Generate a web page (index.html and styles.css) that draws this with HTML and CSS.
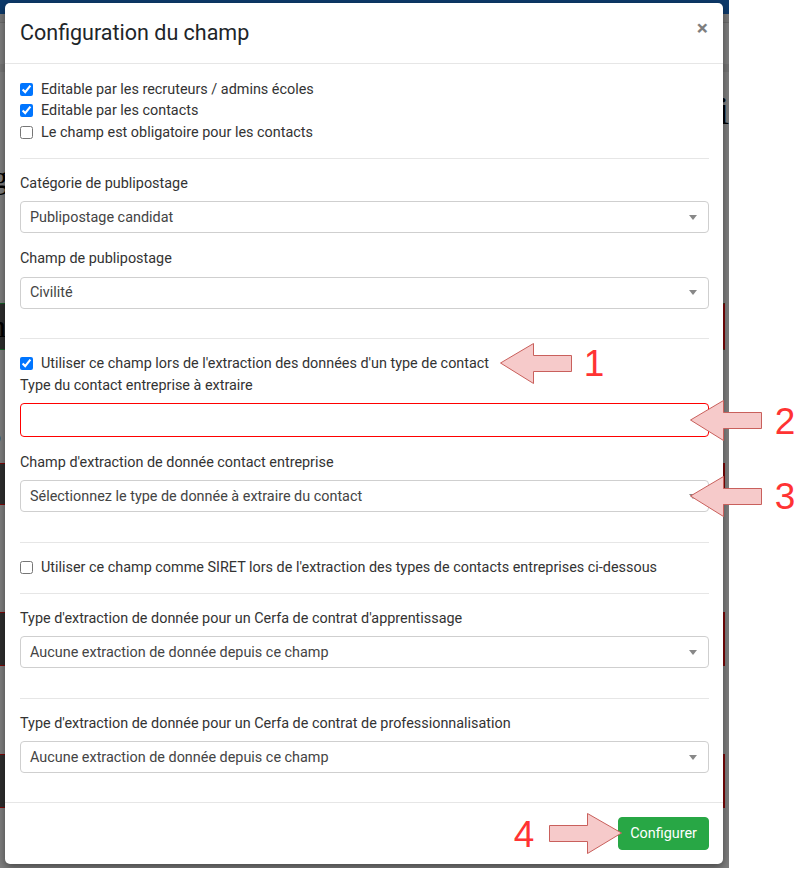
FILE: index.html
```html
<!DOCTYPE html>
<html lang="fr">
<head>
    <meta charset="UTF-8">
    <meta name="viewport" content="width=device-width, initial-scale=1.0">
    <title>Configuration du champ</title>
    <link rel="stylesheet" href="styles.css">
</head>
<body>

    <!-- Page derrière la modale (on n'en voit que les bords) -->
    <div class="screen">
        <div class="topbar"></div>
        <div class="subbar"></div>
        <div class="toolbar"></div>
        <h1 class="bg-title">i</h1>
        <p class="bg-line">g</p>
        <div class="bg-card bg-card-green"><span>n</span></div>
        <p class="bg-line bg-line-s">s</p>
        <div class="bg-card bg-card-short"></div>
        <div class="bg-card bg-card-c"></div>
        <div class="bg-card bg-card-d"></div>

        <div class="backdrop"></div>

        <!-- Modale -->
        <div class="modal">
            <div class="modal-header">
                <h4 class="modal-title">Configuration du champ</h4>
                <button type="button" class="close">&times;</button>
            </div>

            <div class="modal-body">
                <label class="check"><input type="checkbox" checked>Editable par les recruteurs / admins écoles</label>
                <label class="check"><input type="checkbox" checked>Editable par les contacts</label>
                <label class="check"><input type="checkbox">Le champ est obligatoire pour les contacts</label>

                <hr>

                <div class="form-group">
                    <label class="field-label">Catégorie de publipostage</label>
                    <div class="select"><span>Publipostage candidat</span><b class="caret"></b></div>
                </div>
                <div class="form-group">
                    <label class="field-label">Champ de publipostage</label>
                    <div class="select"><span>Civilité</span><b class="caret"></b></div>
                </div>

                <hr>

                <label class="check"><input type="checkbox" checked>Utiliser ce champ lors de l'extraction des données d'un type de contact</label>
                <div class="form-group">
                    <label class="field-label">Type du contact entreprise à extraire</label>
                    <input type="text" class="input input-error">
                </div>
                <div class="form-group">
                    <label class="field-label">Champ d'extraction de donnée contact entreprise</label>
                    <div class="select"><span>Sélectionnez le type de donnée à extraire du contact</span><b class="caret"></b></div>
                </div>

                <hr>

                <label class="check"><input type="checkbox">Utiliser ce champ comme SIRET lors de l'extraction des types de contacts entreprises ci-dessous</label>

                <hr>

                <div class="form-group">
                    <label class="field-label">Type d'extraction de donnée pour un Cerfa de contrat d'apprentissage</label>
                    <div class="select"><span>Aucune extraction de donnée depuis ce champ</span><b class="caret"></b></div>
                </div>

                <hr>

                <div class="form-group">
                    <label class="field-label">Type d'extraction de donnée pour un Cerfa de contrat de professionnalisation</label>
                    <div class="select"><span>Aucune extraction de donnée depuis ce champ</span><b class="caret"></b></div>
                </div>
            </div>

            <div class="modal-footer">
                <button type="button" class="btn-success">Configurer</button>
            </div>
        </div>
    </div>

    <!-- Annotations (flèches et numéros) -->
    <svg class="annotations" width="811" height="870" viewBox="0 0 811 870">
        <polygon points="500.5,363 533.5,343.5 533.5,355.5 571.5,355.5 571.5,371.5 533.5,371.5 533.5,383.5"/>
        <polygon points="690.5,420 723.5,400.5 723.5,412.5 761.5,412.5 761.5,428.5 723.5,428.5 723.5,440.5"/>
        <polygon points="690.5,496 723.5,476.5 723.5,488.5 761.5,488.5 761.5,504.5 723.5,504.5 723.5,516.5"/>
        <polygon points="621.5,833 587.5,813.5 587.5,825.5 549.5,825.5 549.5,841.5 587.5,841.5 587.5,853.5"/>
        <text x="594" y="376">1</text>
        <text x="785" y="434">2</text>
        <text x="785" y="509">3</text>
        <text x="524" y="847">4</text>
    </svg>

</body>
</html>
```

FILE: styles.css
```css
* {
    box-sizing: border-box;
}

body {
    margin: 0;
    background: #fff;
    position: relative;
    width: 811px;
    height: 870px;
    overflow: hidden;
}

/* Page en arrière-plan (visible seulement sur les bords) */
.screen {
    position: relative;
    width: 729px;
    height: 868px;
    overflow: hidden;
    background: #fff;
    font-family: "Liberation Serif", serif;
    color: #000;
}

.topbar {
    height: 14px;
    background: #1a74d6;
}

.subbar {
    height: 9px;
    background: #f2f2f2;
    border-bottom: 1px solid #d8d8d8;
}

.toolbar {
    height: 8px;
    margin-top: 41px;
    background: #ececec;
}

.bg-title {
    margin: 16px 0 0;
    font-size: 40px;
    line-height: 46px;
    font-weight: 400;
    text-align: right;
    white-space: nowrap;
}

.bg-line {
    margin: 25px 0 0 -8px;
    font-size: 32px;
    line-height: 37px;
    white-space: nowrap;
}

.bg-line-s {
    margin: 58px 0 0 -14px;
    font-size: 40px;
    line-height: 46px;
}

.bg-card {
    width: 725px;
    height: 54px;
    margin-top: 107px;
    background: #5c5c5c;
    border-top: 1px solid #ff1010;
    border-bottom: 1px solid #ff1010;
    border-right: 2px solid #ff1010;
    font-size: 32px;
    line-height: 44px;
    white-space: nowrap;
}

.bg-card span {
    margin-left: -10px;
}

.bg-card-green {
    height: 47px;
    border-top-color: #2fc050;
    border-bottom-color: #2fc050;
}

.bg-card-short {
    height: 42px;
    margin-top: 9px;
}

.bg-card-d {
    margin-top: 88px;
}

.backdrop {
    position: absolute;
    top: 0;
    left: 0;
    right: 0;
    bottom: 0;
    background: rgba(0, 0, 0, 0.5);
}

/* Modale */
.modal {
    position: absolute;
    left: 5px;
    top: 3px;
    width: 718px;
    background: #fff;
    border-radius: 5px;
    box-shadow: 0 3px 8px rgba(0, 0, 0, 0.45);
    font-family: Roboto, "Noto Sans", sans-serif;
    font-size: 14.4px;
    color: #212529;
}

.modal-header {
    display: flex;
    justify-content: space-between;
    align-items: flex-start;
    padding: 15px;
    border-bottom: 1px solid #e6e6e6;
    height: 61px;
}

.modal-title {
    margin: 0;
    font-size: 21.5px;
    font-weight: 400;
    line-height: 30px;
}

.close {
    padding: 0;
    margin: 0;
    background: none;
    border: 0;
    font-family: Roboto, sans-serif;
    font-size: 21px;
    font-weight: 700;
    line-height: 21px;
    color: #000;
    opacity: 0.5;
}

/* flex en colonne : les marges ne fusionnent pas */
.modal-body {
    display: flex;
    flex-direction: column;
    padding: 14.5px 14px 13.5px 15px;
}

.check {
    display: flex;
    align-items: center;
    height: 21.5px;
    color: #333;
}

.check input {
    flex: none;
    width: 13px;
    height: 13px;
    margin: 0 8px 0 0;
}

hr {
    width: 100%;
    height: 0;
    margin: 14.5px 0 14px;
    border: 0;
    border-top: 1px solid #e6e6e6;
}

.form-group {
    margin-bottom: 15px;
}

.field-label {
    display: block;
    line-height: 21px;
    margin-bottom: 7.5px;
    color: #333;
}

.select {
    display: flex;
    align-items: center;
    justify-content: space-between;
    height: 32px;
    padding: 0 11px 0 9px;
    border: 1px solid #cfcfcf;
    border-radius: 4px;
    color: #444;
}

.caret {
    width: 0;
    height: 0;
    border-top: 5px solid #888;
    border-left: 4px solid transparent;
    border-right: 4px solid transparent;
}

.input {
    display: block;
    width: 100%;
    height: 33.5px;
    border: 1px solid #ccc;
    border-radius: 4px;
    outline: none;
}

.input-error {
    border-color: #f00;
}

.modal-footer {
    display: flex;
    justify-content: flex-end;
    padding: 14px;
    border-top: 1px solid #e6e6e6;
}

.btn-success {
    height: 33.5px;
    padding: 0 11px;
    background-color: #28a745;
    border: 1px solid #28a745;
    border-radius: 4px;
    color: #fff;
    font-family: Roboto, sans-serif;
    font-size: 14.4px;
    line-height: 21px;
}

/* Annotations */
.annotations {
    position: absolute;
    left: 0;
    top: 0;
    pointer-events: none;
}

.annotations polygon {
    fill: #f6caca;
    stroke: #c9605c;
    stroke-width: 1;
}

.annotations text {
    font-family: "Liberation Sans", Arial, sans-serif;
    font-size: 37px;
    fill: #ff3333;
    text-anchor: middle;
}
```
